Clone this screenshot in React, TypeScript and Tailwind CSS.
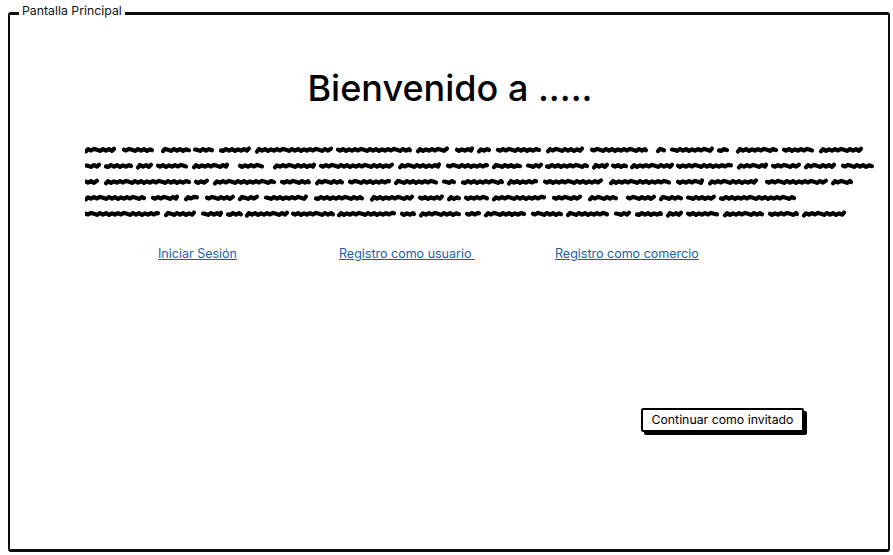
import React from 'react';

// word extents (start, end) of the scribbled paragraph, per line, relative to the page
const scribbleLines: number[][][] = [
  [[85, 115], [123, 153], [162, 190], [194, 213], [220, 250], [256, 332], [337, 411], [417, 448], [456, 473], [478, 490], [497, 540], [547, 583], [591, 647], [657, 665], [671, 713], [718, 728], [737, 777], [783, 813], [820, 862]],
  [[85, 100], [105, 132], [137, 152], [157, 187], [193, 228], [239, 263], [274, 315], [320, 393], [399, 440], [447, 488], [493, 521], [527, 542], [546, 588], [593, 608], [612, 627], [631, 673], [677, 732], [738, 767], [772, 800], [805, 835], [842, 873]],
  [[85, 98], [105, 190], [195, 208], [214, 275], [281, 310], [316, 343], [349, 390], [395, 437], [443, 455], [462, 503], [508, 537], [544, 602], [610, 670], [677, 703], [709, 757], [766, 827], [832, 852]],
  [[85, 145], [152, 178], [185, 198], [206, 234], [239, 258], [265, 307], [315, 363], [371, 413], [419, 443], [448, 460], [465, 488], [493, 545], [553, 581], [589, 617], [627, 655], [660, 682], [687, 715], [720, 795]],
  [[85, 159], [165, 195], [202, 222], [227, 242], [246, 288], [292, 334], [338, 395], [401, 415], [420, 460], [466, 480], [485, 525], [532, 562], [567, 608], [615, 630], [636, 662], [667, 682], [687, 718], [724, 763], [769, 798], [803, 845]],
];

const wave = [5.7, 4.1, 5.5, 3.9, 4.8, 5.9, 4.0, 5.6, 4.2, 5.8, 4.3];

const wordPath = (start: number, end: number, seed: number) => {
  let d = `M${start + 1} ${wave[seed % wave.length] + 0.6}`;
  let i = seed;
  for (let x = start + 3; x < end - 1; x += 3) {
    i += 1;
    d += ` L${x} ${wave[i % wave.length]}`;
  }
  return `${d} L${end - 1} ${wave[(i + 1) % wave.length] - 0.5}`;
};

const ScribbleLine: React.FC<{ words: number[][]; line: number }> = ({ words, line }) => (
  <svg width="800" height="10" viewBox="85 0 800 10" className="block">
    {words.map(([start, end], idx) => (
      <path
        key={idx}
        d={wordPath(start, end, line * 3 + idx)}
        fill="none"
        stroke="#000"
        strokeWidth="4.2"
        strokeLinecap="round"
        strokeLinejoin="round"
      />
    ))}
  </svg>
);

const App: React.FC = () => {
  return (
    <div className="w-[893px] h-[555px] bg-white overflow-hidden pt-[4px] pl-2 text-black font-['Inter','Lato',sans-serif]">
      <fieldset className="w-[882px] h-[548px] border-x-2 border-y-[3px] border-[#0d0d0d] rounded-[3px] flex flex-col">
        <legend className="ml-[9px] px-[3px] pb-[4px] text-[12.3px] leading-[14px] text-[#111]">Pantalla Principal</legend>

        {/* Title */}
        <h1 className="mt-[42px] ml-[2px] text-center text-[36px] leading-[48px] font-medium">Bienvenido a .....</h1>

        {/* Scribbled paragraph */}
        <div className="mt-[33px] ml-[75px] flex flex-col gap-[6px]">
          {scribbleLines.map((words, idx) => (
            <ScribbleLine key={idx} words={words} line={idx} />
          ))}
        </div>

        {/* Links */}
        <div className="mt-[26px] ml-[148px] flex text-[12.5px] leading-[18px] text-[#1c5fa8] underline">
          <a href="#" className="w-[80px] whitespace-nowrap">Iniciar Sesión</a>
          <a href="#" className="ml-[101px] w-[136px] whitespace-pre">Registro como usuario </a>
          <a href="#" className="ml-[80px] w-[144px] whitespace-nowrap">Registro como comercio</a>
        </div>

        {/* Guest button */}
        <button className="mt-[145px] ml-[631px] w-[163px] h-[24px] border-2 border-black rounded-[2px] bg-white shadow-[3px_3px_0_#000] text-[12.3px] leading-[18px]">
          Continuar como invitado
        </button>
      </fieldset>
    </div>
  );
};

export default App;
